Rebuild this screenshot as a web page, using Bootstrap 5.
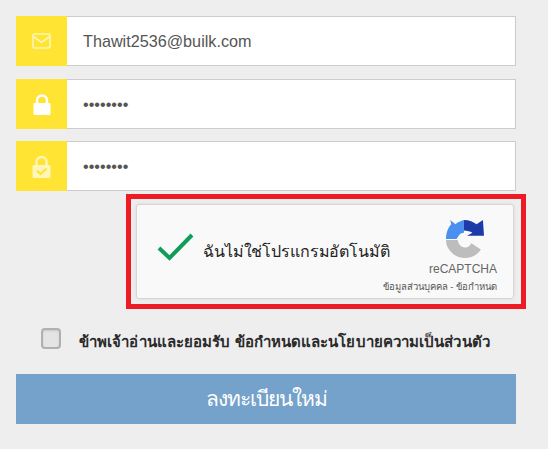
<!DOCTYPE html>
<html lang="th">
<head>
    <meta charset="UTF-8">
    <meta name="viewport" content="width=device-width, initial-scale=1.0">
    <title>ลงทะเบียนใหม่</title>
    <link href="https://cdn.jsdelivr.net/npm/bootstrap@5.3.2/dist/css/bootstrap.min.css" rel="stylesheet">
    <style>
        body {
            font-family: "Liberation Sans", "Noto Sans", sans-serif;
            background-color: #eeeeee;
            overflow: hidden;
        }
        .signup-wrap {
            width: 500px;
            margin-left: 16px;
            padding-top: 16px;
        }
        .field-row {
            height: 50px;
            border: 1px solid #cccccc;
            background: #fff;
            margin-bottom: 13px;
        }
        .field-row.tight {
            margin-bottom: 12px;
        }
        .field-icon {
            width: 51px;
            background: #ffe433;
            margin: -1px 0 -1px -1px;
            flex: none;
        }
        .field-input {
            border: 0;
            outline: 0;
            background: transparent;
            padding: 0 16px;
            width: 100%;
            font-size: 16.2px;
            color: #555555;
        }
        .captcha-frame {
            width: 400px;
            height: 115px;
            margin: -9px 0 0 110px;
            border: 5px solid #ed1c24;
            padding: 5px 7px 5px 5px;
        }
        .captcha-box {
            height: 95px;
            background: #f9f9f9;
            border: 1px solid #d6d6d6;
            border-radius: 3px;
            box-shadow: 0 0 4px rgba(0, 0, 0, .08);
            padding-left: 20px;
        }
        .captcha-check {
            margin-top: -9px;
            flex: none;
        }
        .captcha-label {
            font-size: 16px;
            color: #222222;
            margin-left: 9px;
            letter-spacing: -.12px;
            white-space: nowrap;
            flex: 1 1 auto;
            width: 0;
        }
        .captcha-brand {
            flex: none;
            text-align: right;
            padding-right: 16px;
            margin-top: 9px;
            white-space: nowrap;
        }
        .captcha-name {
            font-size: 12px;
            color: #666666;
            line-height: 14px;
            margin-top: 4px;
        }
        .captcha-links {
            font-size: 9.500px;
            color: #555555;
            line-height: 12px;
            margin-top: 5px;
        }
        .captcha-logo {
            display: block;
            margin: 0 13px 0 auto;
        }
        .agree-row {
            margin: 19px 0 0 25px;
            height: 22px;
        }
        .agree-box {
            width: 20px;
            height: 21px;
            border: 2px solid #b0b0b0;
            border-radius: 4px;
            background: #e4e4e4;
            box-shadow: inset 0 1px 2px rgba(0, 0, 0, .12);
            flex: none;
        }
        .agree-text {
            font-size: 15px;
            font-weight: 700;
            color: #2a2a2a;
            margin: 3px 0 0 18px;
            line-height: 22px;
            letter-spacing: .08px;
            white-space: nowrap;
        }
        .submit-btn {
            display: block;
            width: 500px;
            height: 50px;
            margin-top: 24px;
            border: 0;
            border-radius: 0;
            background: #74a2cb;
            color: #fff;
            font-size: 21px;
            letter-spacing: -1px;
            padding: 0;
        }
    </style>
</head>
<body>
<div class="signup-wrap">
    <div class="field-row d-flex">
        <div class="field-icon d-flex align-items-center justify-content-center">
            <svg width="19" height="16" viewBox="0 0 19 16" fill="none" stroke="#fff6b8" stroke-width="1.600"><rect x="1" y="1" width="17" height="14" rx="1.500"/><path d="M1.500 3.500 9.500 9.500 17.500 3.500"/></svg>
        </div>
        <input class="field-input" type="text" value="Thawit2536@builk.com">
    </div>
    <div class="field-row tight d-flex">
        <div class="field-icon d-flex align-items-center justify-content-center">
            <svg width="18" height="21" viewBox="0 0 18 21"><path d="M4 10V6.500a5 5 0 0 1 10 0V10" fill="none" stroke="#fff" stroke-width="2.400"/><rect x="0.500" y="9" width="17" height="12" rx="1" fill="#fff"/></svg>
        </div>
        <input class="field-input" type="password" value="12345678">
    </div>
    <div class="field-row tight d-flex">
        <div class="field-icon d-flex align-items-center justify-content-center">
            <svg width="19" height="23" viewBox="0 0 19 23"><path d="M4.500 11V7a5 5 0 0 1 10 0v4" fill="none" stroke="#fff6b8" stroke-width="2.400"/><rect x="0.500" y="10" width="18" height="13" rx="1.500" fill="#fff6b8"/><path d="M5 15.500 8.500 19 14.500 13.500" fill="none" stroke="#ffe433" stroke-width="2.200"/></svg>
        </div>
        <input class="field-input" type="password" value="12345678">
    </div>
    <div class="captcha-frame">
        <div class="captcha-box d-flex align-items-center">
            <svg class="captcha-check" width="37" height="28" viewBox="0 0 37 28"><path d="M2 15 12.500 25 35 2" fill="none" stroke="#0f9d58" stroke-width="4"/></svg>
            <span class="captcha-label">ฉันไม่ใช่โปรแกรมอัตโนมัติ</span>
            <div class="captcha-brand">
                <svg class="captcha-logo" width="38" height="38" viewBox="0 0 36 36">
                    <path d="M4 0 9 4C11 2 14 1 17 0V12C15 12 13 13 12 15L10 18H0C0 12 2 7 5 4Z" fill="#4a90f0"/>
                    <path d="M17 0C22 0 26 2 29 4L35 0 36 15H20L25 12C23 11 20 10 17 10Z" fill="#1c3aa9"/>
                    <path d="M0 19H11C12 23 14 26 18 26C21 26 22 25 24 22L33 28C30 33 24 36 18 36C8 36 0 28 0 19Z" fill="#bdbdbd"/>
                </svg>
                <div class="captcha-name">reCAPTCHA</div>
                <div class="captcha-links">ข้อมูลส่วนบุคคล - ข้อกำหนด</div>
            </div>
        </div>
    </div>
    <div class="agree-row d-flex align-items-start">
        <span class="agree-box"></span>
        <span class="agree-text">ข้าพเจ้าอ่านและยอมรับ ข้อกำหนดและนโยบายความเป็นส่วนตัว</span>
    </div>
    <button class="btn submit-btn" type="button">ลงทะเบียนใหม่</button>
</div>
<script src="https://cdn.jsdelivr.net/npm/bootstrap@5.3.2/dist/js/bootstrap.bundle.min.js"></script>
</body>
</html>
